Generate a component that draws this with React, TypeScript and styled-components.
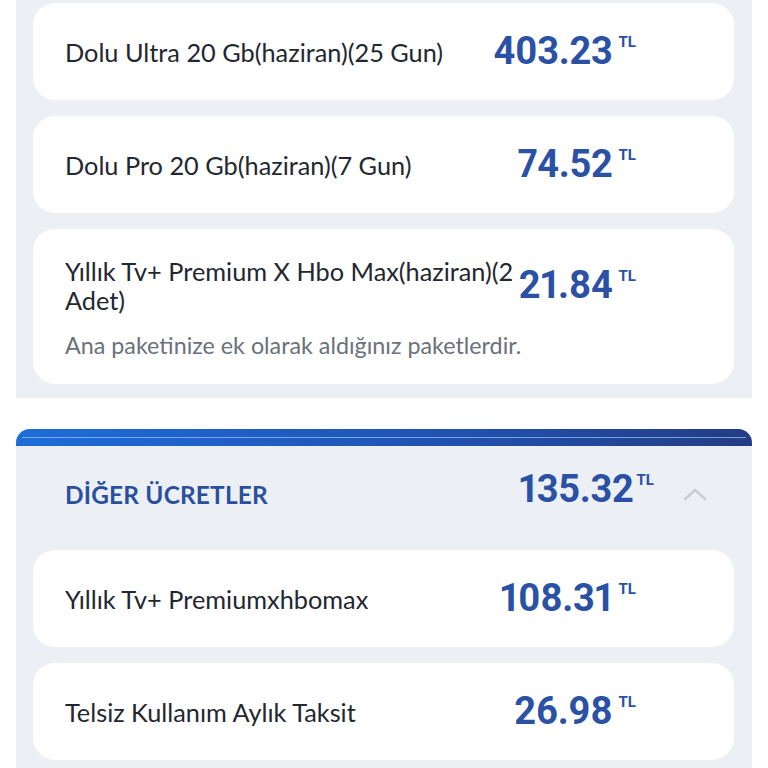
import React from "react";
import styled, { createGlobalStyle } from "styled-components";

const Global = createGlobalStyle`
  html, body { margin: 0; padding: 0; background: #ffffff; }
  body { font-family: "Lato", "Noto Sans", sans-serif; -webkit-font-smoothing: antialiased; }
  * { box-sizing: border-box; }
`;

const Page = styled.div`
  width: 768px;
  padding: 0 16px;
  display: flex;
  flex-direction: column;
`;

const Panel = styled.section<{ $top?: boolean }>`
  background: #eceff3;
  display: flex;
  flex-direction: column;
  gap: 16px;
  padding: ${(p) => (p.$top ? "3px 18px 14px 17px" : "0 18px 16px 17px")};
`;

const Gap = styled.div`
  height: 31px;
`;

const Bar = styled.div`
  height: 17px;
  border-radius: 14px 14px 0 0;
  background: linear-gradient(90deg, #1d6dd9 0%, #2153b4 55%, #243c84 100%);
  position: relative;
  &::after {
    content: "";
    position: absolute;
    left: 6px;
    right: 6px;
    top: 8px;
    height: 1px;
    background: rgba(140, 195, 250, 0.75);
  }
`;

const Header = styled.div`
  display: flex;
  align-items: center;
  min-height: 45px;
  padding: 21px 26px 22px 32px;
`;

const HeaderTitle = styled.div`
  flex: 1;
  font-family: "Lato", sans-serif;
  font-weight: 700;
  font-size: 24.4px;
  color: #2a4f9f;
  letter-spacing: 0.2px;
  padding-top: 10px;
`;

const Chevron = styled.svg`
  width: 26px;
  height: 16px;
  margin-left: 28px;
  margin-top: 8px;
  flex: none;
`;

const Card = styled.div`
  background: #ffffff;
  border-radius: 22px;
  padding: 26px 98px 26px 32px;
  display: flex;
  flex-direction: column;
  gap: 17px;
`;

const Row = styled.div`
  display: flex;
  align-items: center;
  min-height: 45px;
  gap: 1px;
`;

const Name = styled.div`
  flex: 1;
  min-width: 0;
  font-family: "Lato", sans-serif;
  font-size: 25.3px;
  line-height: 29px;
  color: #23272f;
  padding-top: 2px;
`;

const Sub = styled.div`
  font-family: "Lato", sans-serif;
  font-size: 23.3px;
  line-height: 26px;
  color: #6b717a;
`;

const Price = styled.div<{ $tight?: boolean }>`
  flex: none;
  display: flex;
  align-items: flex-start;
  color: #2a51a4;
  font-family: "Roboto", sans-serif;
  font-weight: 700;
  font-variant-numeric: proportional-nums;
`;

const Amount = styled.span`
  font-size: 38px;
  line-height: 45px;
  letter-spacing: -0.3px;
`;

const Cur = styled.span<{ $tight?: boolean }>`
  font-size: 15px;
  line-height: 15px;
  margin-left: ${(p) => (p.$tight ? "3px" : "6px")};
  margin-top: 6px;
`;

const PriceTag = ({ v, tight }: { v: string; tight?: boolean }) => (
  <Price>
    <Amount>{v}</Amount>
    <Cur $tight={tight}>TL</Cur>
  </Price>
);

const Item = ({ name, price, sub }: { name: string; price: string; sub?: string }) => (
  <Card>
    <Row>
      <Name>{name}</Name>
      <PriceTag v={price} />
    </Row>
    {sub && <Sub>{sub}</Sub>}
  </Card>
);

export default function App() {
  return (
    <Page>
      <Global />
      <Panel $top>
        <Item name="Dolu Ultra 20 Gb(haziran)(25 Gun)" price="403.23" />
        <Item name="Dolu Pro 20 Gb(haziran)(7 Gun)" price="74.52" />
        <Item
          name={"Yıllık Tv+ Premium X Hbo Max(haziran)\u2060(2 Adet)"}
          price="21.84"
          sub="Ana paketinize ek olarak aldığınız paketlerdir."
        />
      </Panel>
      <Gap />
      <Bar />
      <Panel>
        <Header>
          <HeaderTitle>DİĞER ÜCRETLER</HeaderTitle>
          <PriceTag v="135.32" tight />
          <Chevron viewBox="0 0 26 16">
            <path d="M3 13 L13 4 L23 13" fill="none" stroke="#c9ccd1" strokeWidth="2.6" strokeLinecap="round" strokeLinejoin="round" />
          </Chevron>
        </Header>
        <Item name="Yıllık Tv+ Premiumxhbomax" price="108.31" />
        <Item name="Telsiz Kullanım Aylık Taksit" price="26.98" />
      </Panel>
    </Page>
  );
}
